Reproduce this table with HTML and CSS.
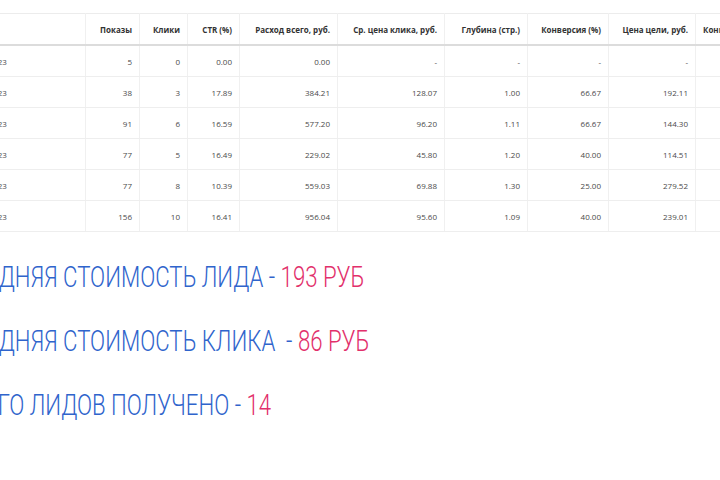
FILE: index.html
```html
<!DOCTYPE html>
<html lang="ru">
<head>
<meta charset="utf-8">
<link rel="stylesheet" href="styles.css">
</head>
<body>
<div class="page">
  <table class="stats">
    <colgroup>
      <col class="c1"><col class="c2"><col class="c3"><col class="c4"><col class="c5">
      <col class="c6"><col class="c7"><col class="c8"><col class="c9"><col class="c10">
    </colgroup>
    <thead>
      <tr>
        <th class="left"></th>
        <th>Показы</th>
        <th>Клики</th>
        <th>CTR (%)</th>
        <th>Расход всего, руб.</th>
        <th>Ср. цена клика, руб.</th>
        <th>Глубина (стр.)</th>
        <th>Конверсия (%)</th>
        <th>Цена цели, руб.</th>
        <th class="lastcol">Конверсии</th>
      </tr>
    </thead>
    <tbody>
      <tr><td class="left">11.09.2023</td><td>5</td><td>0</td><td>0.00</td><td>0.00</td><td>-</td><td>-</td><td>-</td><td>-</td><td></td></tr>
      <tr><td class="left">12.09.2023</td><td>38</td><td>3</td><td>17.89</td><td>384.21</td><td>128.07</td><td>1.00</td><td>66.67</td><td>192.11</td><td></td></tr>
      <tr><td class="left">13.09.2023</td><td>91</td><td>6</td><td>16.59</td><td>577.20</td><td>96.20</td><td>1.11</td><td>66.67</td><td>144.30</td><td></td></tr>
      <tr><td class="left">14.09.2023</td><td>77</td><td>5</td><td>16.49</td><td>229.02</td><td>45.80</td><td>1.20</td><td>40.00</td><td>114.51</td><td></td></tr>
      <tr><td class="left">15.09.2023</td><td>77</td><td>8</td><td>10.39</td><td>559.03</td><td>69.88</td><td>1.30</td><td>25.00</td><td>279.52</td><td></td></tr>
      <tr><td class="left">16.09.2023</td><td>156</td><td>10</td><td>16.41</td><td>956.04</td><td>95.60</td><td>1.09</td><td>40.00</td><td>239.01</td><td></td></tr>
    </tbody>
  </table>

  <div class="summary">
    <div class="line l1"><span class="txt"><span class="lbl">Средняя стоимость лида - </span><span class="val">193 руб</span></span></div>
    <div class="line l2"><span class="txt"><span class="lbl">Средняя стоимость клика &nbsp;- </span><span class="val">86 руб</span></span></div>
    <div class="line l3"><span class="txt"><span class="lbl">Всего лидов получено - </span><span class="val">14</span></span></div>
  </div>
</div>
</body>
</html>
```

FILE: styles.css
```css
html, body {
  margin: 0;
  padding: 0;
  background: #fff;
  overflow: hidden;
  width: 720px;
  height: 480px;
}

.page {
  width: 720px;
  height: 480px;
  overflow: hidden;
  font-family: "Open Sans", "Liberation Sans", sans-serif;
}

.stats {
  margin-top: 13px;
  margin-left: -42px;
  border-collapse: collapse;
  table-layout: fixed;
  width: 837px;
  font-size: 8px;
  color: #4a4a4a;
}

.c1 { width: 127px; }
.c2 { width: 54px; }
.c3 { width: 48px; }
.c4 { width: 52px; }
.c5 { width: 98px; }
.c6 { width: 107px; }
.c7 { width: 83px; }
.c8 { width: 81px; }
.c9 { width: 87px; }
.c10 { width: 100px; }

.stats th,
.stats td {
  text-align: right;
  padding: 0 7px;
  white-space: nowrap;
  overflow: hidden;
  border-left: 1px solid #f0f0f0;
  border-right: 1px solid #f0f0f0;
}

.stats thead th {
  height: 30px;
  font-weight: 700;
  color: #333;
  border-top: 1px solid #ececec;
  border-bottom: 2px solid #dcdcdc;
}

.stats th.lastcol {
  text-align: left;
}

.stats tbody td {
  height: 30px;
  border-bottom: 1px solid #eeeeee;
}

.stats .left {
  text-align: left;
}

.summary {
  margin-top: 13px;
}

.line {
  height: 64px;
  line-height: 64px;
  white-space: nowrap;
}

.l1 { margin-left: -42px; }
.l2 { margin-left: -42px; }
.l3 { margin-left: -43px; }

.txt {
  display: inline-block;
  font-family: Roboto, "Liberation Sans", sans-serif;
  font-weight: 300;
  font-size: 30px;
  text-transform: uppercase;
  transform: scaleX(0.74);
  transform-origin: left center;
}

.lbl { color: #2f64cc; }
.val { color: #e2306b; }
```
